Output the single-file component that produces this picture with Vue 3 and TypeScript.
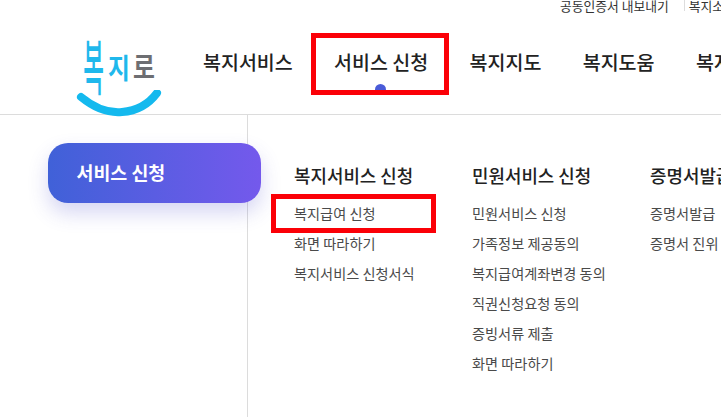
<script setup lang="ts">
interface MenuColumn {
  title: string
  links: string[]
  marked?: string
}

const navItems = ['복지서비스', '서비스 신청', '복지지도', '복지도움', '복지정보']
const activeNav = '서비스 신청'

const columns: MenuColumn[] = [
  { title: '복지서비스 신청', links: ['복지급여 신청', '화면 따라하기', '복지서비스 신청서식'], marked: '복지급여 신청' },
  { title: '민원서비스 신청', links: ['민원서비스 신청', '가족정보 제공동의', '복지급여계좌변경 동의', '직권신청요청 동의', '증빙서류 제출', '화면 따라하기'] },
  { title: '증명서발급', links: ['증명서발급', '증명서 진위'] }
]
</script>

<template>
  <div class="page">
    <div class="util">
      <a class="util-link">공동인증서 내보내기</a>
      <a class="util-link second">복지소식</a>
    </div>

    <header class="head">
      <div class="logo">
        <div class="logo-text"><span class="l1">복</span><span class="l2">지</span><span class="l3">로</span></div>
        <svg class="smile" width="90" height="30" viewBox="0 0 90 30">
          <path d="M5 7 C22 21 35 23 46 22 C60 21 72 15 81 3" fill="none" stroke="#14b9ee" stroke-width="8" stroke-linecap="round" />
        </svg>
      </div>
      <nav class="nav">
        <a v-for="item in navItems" :key="item" class="nav-item" :class="{ active: item === activeNav }">
          {{ item }}
          <i v-if="item === activeNav" class="dot"></i>
          <i v-if="item === activeNav" class="mark"></i>
        </a>
      </nav>
    </header>

    <div class="panel">
      <aside class="side">
        <div class="side-btn">서비스 신청</div>
      </aside>
      <div class="cols">
        <section v-for="col in columns" :key="col.title" class="col">
          <h3>{{ col.title }}</h3>
          <ul>
            <li v-for="link in col.links" :key="link">
              {{ link }}
              <i v-if="link === col.marked" class="mark-link"></i>
            </li>
          </ul>
        </section>
      </div>
    </div>
  </div>
</template>

<style>
html, body { margin: 0; background: #fff; overflow: hidden; }
</style>

<style scoped>
.page {
  width: 721px;
  height: 417px;
  overflow: hidden;
  font-family: "Noto Sans CJK KR", "Noto Sans", sans-serif;
  color: #222;
  background: #fff;
}
.util {
  height: 14px;
  display: flex;
  padding-left: 560px;
  white-space: nowrap;
  font-size: 12.8px;
  line-height: 11px;
  color: #333;
}
.util-link.second {
  margin-left: 15px;
  padding-left: 4px;
  border-left: 1px solid #ddd;
  height: 11px;
}
.head {
  height: 101px;
  box-sizing: border-box;
  border-bottom: 1px solid #dcdcdc;
  display: flex;
  white-space: nowrap;
}
.logo {
  width: 203px;
  flex: none;
  position: relative;
}
.logo-text {
  position: absolute;
  left: 80px;
  top: 36px;
  font-size: 28px;
  line-height: 34px;
  font-weight: 700;
  color: #1fb8ec;
  display: flex;
}
.l1 {
  width: 26px;
  font-size: 30px;
  font-weight: 500;
  transform: scale(0.75, 2);
  transform-origin: 50% 50%;
  margin-top: -2px;
}
.l2 {
  width: 26px;
  transform: scale(0.85, 1);
}
.l3 {
  color: #6d6e72;
  transform: scale(0.85, 1);
  margin-left: -1px;
  margin-top: -1px;
}
.smile {
  position: absolute;
  left: 76px;
  top: 76px;
}
.nav {
  display: flex;
  gap: 41.4px;
}
.nav-item {
  position: relative;
  padding-top: 34px;
  font-size: 19.5px;
  line-height: 28px;
  font-weight: 500;
  color: #222;
}
.dot {
  position: absolute;
  left: 41px;
  top: 70px;
  width: 11px;
  height: 11px;
  border-radius: 50%;
  background: #4a5bd8;
}
.mark {
  position: absolute;
  left: -23px;
  right: -21px;
  top: 19px;
  height: 62px;
  box-sizing: border-box;
  border: 5px solid #fb0007;
}
.panel {
  height: 302px;
  display: flex;
}
.side {
  width: 248px;
  flex: none;
  box-sizing: border-box;
  border-right: 1px solid #dcdcdc;
  padding: 28px 0 0 48px;
  height: 302px;
}
.side-btn {
  width: 213px;
  height: 60px;
  box-sizing: border-box;
  padding-left: 28.5px;
  border-radius: 20px;
  line-height: 58px;
  font-size: 18.4px;
  font-weight: 700;
  color: #fff;
  background: linear-gradient(90deg, #4061d8, #7459ec);
  box-shadow: 0 10px 20px rgba(70, 70, 200, 0.22);
}
.cols {
  display: flex;
  padding-left: 46px;
  white-space: nowrap;
}
.col {
  width: 178px;
  flex: none;
}
.col h3 {
  margin: 47px 0 0;
  font-size: 17.9px;
  line-height: 26px;
  font-weight: 500;
  color: #222;
}
.col ul {
  list-style: none;
  margin: 10px 0 0;
  padding: 0;
}
.col li {
  position: relative;
  height: 30px;
  line-height: 30px;
  font-size: 14.2px;
  color: #4a4a4a;
}
.mark-link {
  position: absolute;
  left: -23px;
  top: -4px;
  width: 165px;
  height: 39px;
  box-sizing: border-box;
  border: 5px solid #fb0007;
}
</style>
